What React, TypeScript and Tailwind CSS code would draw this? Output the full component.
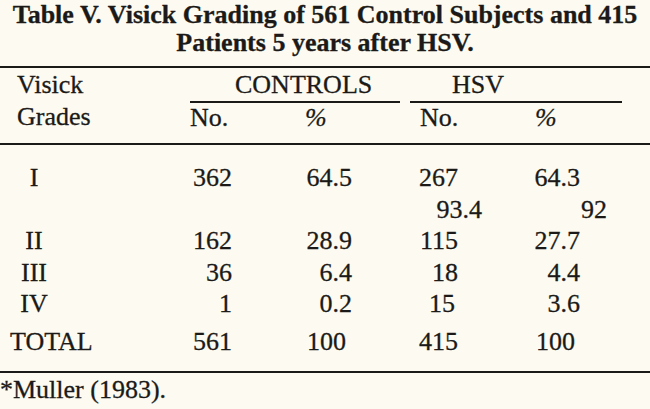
type Row = {
  grade: string;
  cn: string;
  cp: string;
  hn: string;
  hp: string;
  cpPad?: string;
  hnPad?: string;
  hpPad?: string;
};

const rowsTop: Row[] = [{ grade: 'I', cn: '362', cp: '64.5', hn: '267', hp: '64.3' }];

const rowsBottom: Row[] = [
  { grade: 'II', cn: '162', cp: '28.9', hn: '115', hp: '27.7' },
  { grade: 'III', cn: '36', cp: '6.4', hn: '18', hp: '4.4' },
  { grade: 'IV', cn: '1', cp: '0.2', hn: '15', hp: '3.6', hnPad: 'pr-[3px]' },
];

function DataRow({ row }: { row: Row }) {
  return (
    <div className="flex leading-[31.5px]">
      <div className="w-[190px]">
        <div className="w-[68px] text-center">{row.grade}</div>
      </div>
      <div className="w-[42px] text-right">{row.cn}</div>
      <div className={`w-[120px] text-right ${row.cpPad ?? ''}`}>{row.cp}</div>
      <div className={`w-[106px] text-right ${row.hnPad ?? ''}`}>{row.hn}</div>
      <div className={`w-[122px] text-right ${row.hpPad ?? ''}`}>{row.hp}</div>
    </div>
  );
}

export default function App() {
  return (
    <div className="w-[650px] h-[409px] overflow-hidden bg-[#fdfbf1] text-[#1b1a18] font-['Liberation_Serif','Times_New_Roman',serif] text-[26px] [-webkit-text-stroke:0.3px_#1b1a18]">
      {/* title */}
      <div className="pt-[1px] text-center font-bold leading-[28px]">
        <div className="whitespace-nowrap">Table V. Visick Grading of 561 Control Subjects and 415</div>
        <div className="whitespace-nowrap">Patients 5 years after HSV.</div>
      </div>

      <div className="mt-[9px] h-[2px] bg-[#1b1a18]" />

      {/* column heads */}
      <div className="mt-[1px] flex">
        <div className="w-[190px] pl-[17px] leading-[32px]">
          <div>Visick</div>
          <div>Grades</div>
        </div>
        <div className="w-[210px]">
          <div className="pl-[45px] leading-[32px]">CONTROLS</div>
          <div className="flex border-t-2 border-[#1b1a18] leading-[29px]">
            <span className="w-[115px]">No.</span>
            <span className="italic">%</span>
          </div>
        </div>
        <div className="ml-[10px] w-[212px]">
          <div className="pl-[42px] leading-[32px]">HSV</div>
          <div className="flex border-t-2 border-[#1b1a18] pl-[10px] leading-[29px]">
            <span className="w-[115px]">No.</span>
            <span className="italic">%</span>
          </div>
        </div>
      </div>

      <div className="mt-[10px] h-[2px] bg-[#1b1a18]" />

      {/* body */}
      <div className="mt-[17px]">
        {rowsTop.map((r) => (
          <DataRow key={r.grade} row={r} />
        ))}
        <div className="flex leading-[31.5px]">
          <div className="w-[352px]" />
          <div className="w-[130px] text-right">93.4</div>
          <div className="w-[125px] text-right">92</div>
        </div>
        {rowsBottom.map((r) => (
          <DataRow key={r.grade} row={r} />
        ))}
        <div className="mt-[6px] flex leading-[31.5px]">
          <div className="w-[190px] pl-[10px]">TOTAL</div>
          <div className="w-[42px] text-right">561</div>
          <div className="w-[120px] pr-[6px] text-right">100</div>
          <div className="w-[106px] text-right">415</div>
          <div className="w-[122px] pr-[5px] text-right">100</div>
        </div>
      </div>

      <div className="mt-[14px] h-[2px] bg-[#1b1a18]" />

      <div className="mt-[4px] leading-[26px]">*Muller (1983).</div>
    </div>
  );
}
